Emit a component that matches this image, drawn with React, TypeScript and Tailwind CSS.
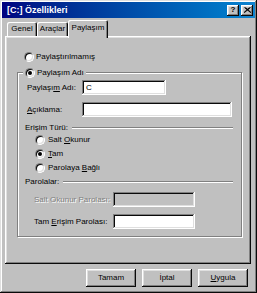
import React from 'react';

const font = "font-['Liberation_Sans',Arial,sans-serif]";
const raised =
  'shadow-[inset_-1px_-1px_#0a0a0a,inset_1px_1px_#fff,inset_-2px_-2px_#808080,inset_2px_2px_#dfdfdf]';
const sunken =
  'shadow-[inset_-1px_-1px_#fff,inset_1px_1px_#808080,inset_-2px_-2px_#dfdfdf,inset_2px_2px_#0a0a0a]';

function Radio({ checked }: { checked?: boolean }) {
  return (
    <span className="relative inline-block w-[10px] h-[10px] shrink-0 rounded-full bg-white border border-t-[#808080] border-l-[#808080] border-r-white border-b-white">
      <span className="absolute inset-0 rounded-full shadow-[inset_1px_1px_#0a0a0a,inset_-1px_-1px_#dfdfdf]" />
      {checked && <span className="absolute left-[2px] top-[2px] w-[4px] h-[4px] rounded-full bg-black" />}
    </span>
  );
}

function Etched() {
  return <div className="flex-1 h-[2px] border-t border-t-[#808080] bg-white" />;
}

function Field({ value, disabled, w }: { value?: string; disabled?: boolean; w: string }) {
  return (
    <div className={`${w} h-[15px] pl-[4px] flex items-center ${sunken} ${disabled ? 'bg-[#c0c0c0]' : 'bg-white'}`}>
      {value}
    </div>
  );
}

export default function App() {
  return (
    <div
      className={`${font} text-[8px] leading-none text-black w-[257px] h-[293px] bg-[#c0c0c0] flex flex-col shadow-[inset_-1px_-1px_#0a0a0a,inset_1px_1px_#dfdfdf,inset_-2px_-2px_#808080,inset_2px_2px_#fff]`}
    >
      {/* Title bar */}
      <div className="mx-[2px] mt-[2px] h-[16px] flex items-center justify-between bg-gradient-to-r from-[#000080] to-[#1084d0]">
        <span className="pl-[5px] text-white font-bold text-[9px]">[C:] Özellikleri</span>
        <div className="flex items-center gap-[2px] pr-[2px]">
          <div className={`w-[12px] h-[11px] bg-[#c0c0c0] flex items-center justify-center font-bold text-[8px] ${raised}`}>?</div>
          <div className={`w-[12px] h-[11px] bg-[#c0c0c0] flex items-center justify-center ${raised}`}>
            <svg width="7" height="6" viewBox="0 0 7 6">
              <path d="M0.5 0.5 L6.5 5.5 M1.5 0.5 L7 5.5 M6.5 0.5 L0.5 5.5 M5.5 0.5 L0 5.5" stroke="#000" strokeWidth="1" />
            </svg>
          </div>
        </div>
      </div>

      {/* Tabs */}
      <div className="mt-[2px] h-[16px] pl-[7px] flex items-end">
        <div className="w-[30px] h-[14px] flex items-center justify-center rounded-t-[2px] shadow-[inset_1px_1px_#fff,inset_-1px_0_#0a0a0a,inset_-2px_0_#808080]">
          Genel
        </div>
        <div className="w-[31px] h-[14px] flex items-center justify-center rounded-t-[2px] shadow-[inset_1px_1px_#fff,inset_-1px_0_#0a0a0a,inset_-2px_0_#808080]">
          Araçlar
        </div>
        <div className="relative z-10 w-[40px] h-[18px] -mb-[2px] pb-[3px] flex items-center justify-center bg-[#c0c0c0] rounded-t-[2px] shadow-[inset_1px_1px_#fff,inset_-1px_0_#0a0a0a,inset_-2px_0_#808080]">
          Paylaşım
        </div>
      </div>

      {/* Panel */}
      <div className={`ml-[5px] w-[246px] h-[228px] flex flex-col ${raised}`}>
        <div className="mt-[14px] h-[14px] pl-[19px] flex items-center gap-[2px]">
          <Radio />
          <span>Paylaştırılmamış</span>
        </div>

        <div className="relative ml-[12px] mt-[8px] w-[225px] h-[165px] flex flex-col border border-[#808080] shadow-[inset_1px_1px_#fff,1px_1px_#fff]">
          <div className="absolute -top-[7px] left-[5px] h-[14px] px-[2px] flex items-center gap-[2px] bg-[#c0c0c0]">
            <Radio checked />
            <span>Paylaşım Adı</span>
          </div>

          <div className="mt-[7px] h-[15px] pl-[9px] flex items-center">
            <span className="w-[55px]">
              Paylaşı<u>m</u> Adı:
            </span>
            <Field w="w-[84px]" value="C" />
          </div>
          <div className="mt-[7px] h-[15px] pl-[9px] flex items-center">
            <span className="w-[55px]">
              <u>A</u>çıklama:
            </span>
            <Field w="w-[150px]" />
          </div>

          <div className="mt-[5px] h-[11px] pl-[7px] pr-[8px] flex items-center gap-[4px]">
            <span>Erişim Türü:</span>
            <Etched />
          </div>
          <div className="h-[14px] pl-[17px] flex items-center gap-[3px]">
            <Radio />
            <span>
              Salt <u>O</u>kunur
            </span>
          </div>
          <div className="h-[14px] pl-[17px] flex items-center gap-[3px]">
            <Radio checked />
            <span>
              <u>T</u>am
            </span>
          </div>
          <div className="h-[14px] pl-[17px] flex items-center gap-[3px]">
            <Radio />
            <span>
              Parolaya <u>B</u>ağlı
            </span>
          </div>

          <div className="h-[14px] pl-[7px] pr-[8px] flex items-center gap-[4px]">
            <span>Parolalar:</span>
            <Etched />
          </div>
          <div className="mt-[3px] h-[15px] pl-[16px] flex items-center">
            <span className="w-[79px] text-[#808080] [text-shadow:1px_1px_0_#fff]">Salt Okunur Parolası:</span>
            <Field w="w-[82px]" disabled />
          </div>
          <div className="mt-[7px] h-[15px] pl-[16px] flex items-center">
            <span className="w-[79px]">
              Tam <u>E</u>rişim Parolası:
            </span>
            <Field w="w-[82px]" />
          </div>
        </div>
      </div>

      {/* Buttons */}
      <div className="mt-[5px] pr-[9px] flex justify-end gap-[6px]">
        {[
          { key: 'ok', label: <>Tamam</> },
          { key: 'cancel', label: <>İptal</> },
          { key: 'apply', label: <><u>U</u>ygula</> },
        ].map(b => (
          <div key={b.key} className={`w-[50px] h-[18px] flex items-center justify-center bg-[#c0c0c0] ${raised}`}>
            {b.label}
          </div>
        ))}
      </div>
    </div>
  );
}
